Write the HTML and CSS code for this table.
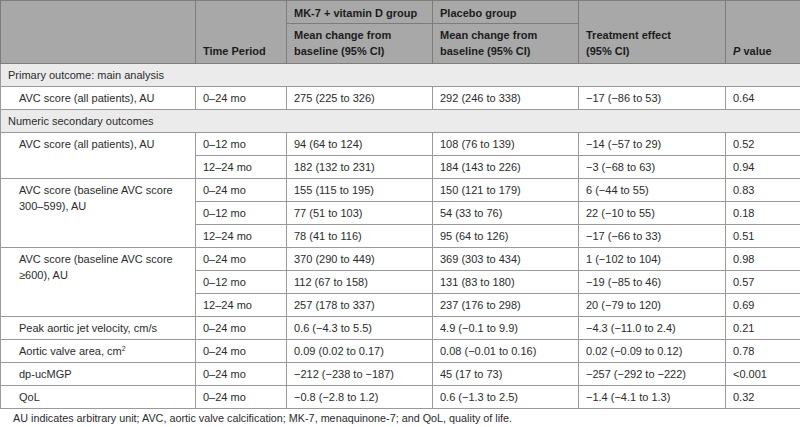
FILE: index.html
```html
<!DOCTYPE html>
<html>
<head>
<meta charset="utf-8">
<link rel="stylesheet" href="styles.css">
</head>
<body>
<table class="results">
  <colgroup>
    <col class="c-outcome">
    <col class="c-time">
    <col class="c-group">
    <col class="c-group">
    <col class="c-effect">
    <col class="c-p">
  </colgroup>
  <thead>
    <tr class="head-top">
      <th rowspan="2"></th>
      <th rowspan="2" class="bottom">Time Period</th>
      <th class="top">MK-7 + vitamin D group</th>
      <th class="top">Placebo group</th>
      <th rowspan="2" class="bottom">Treatment effect<br>(95% CI)</th>
      <th rowspan="2" class="bottom"><i>P</i> value</th>
    </tr>
    <tr class="head-sub">
      <th>Mean change from<br>baseline (95% CI)</th>
      <th>Mean change from<br>baseline (95% CI)</th>
    </tr>
  </thead>
  <tbody>
    <tr class="section"><td colspan="6">Primary outcome: main analysis</td></tr>
    <tr>
      <td class="label">AVC score (all patients), AU</td>
      <td>0–24 mo</td><td>275 (225 to 326)</td><td>292 (246 to 338)</td><td>−17 (−86 to 53)</td><td>0.64</td>
    </tr>
    <tr class="section"><td colspan="6">Numeric secondary outcomes</td></tr>
    <tr>
      <td class="label" rowspan="2">AVC score (all patients), AU</td>
      <td>0–12 mo</td><td>94 (64 to 124)</td><td>108 (76 to 139)</td><td>−14 (−57 to 29)</td><td>0.52</td>
    </tr>
    <tr>
      <td>12–24 mo</td><td>182 (132 to 231)</td><td>184 (143 to 226)</td><td>−3 (−68 to 63)</td><td>0.94</td>
    </tr>
    <tr>
      <td class="label" rowspan="3">AVC score (baseline AVC score<br>300–599), AU</td>
      <td>0–24 mo</td><td>155 (115 to 195)</td><td>150 (121 to 179)</td><td>6 (−44 to 55)</td><td>0.83</td>
    </tr>
    <tr>
      <td>0–12 mo</td><td>77 (51 to 103)</td><td>54 (33 to 76)</td><td>22 (−10 to 55)</td><td>0.18</td>
    </tr>
    <tr>
      <td>12–24 mo</td><td>78 (41 to 116)</td><td>95 (64 to 126)</td><td>−17 (−66 to 33)</td><td>0.51</td>
    </tr>
    <tr>
      <td class="label" rowspan="3">AVC score (baseline AVC score<br>≥600), AU</td>
      <td>0–24 mo</td><td>370 (290 to 449)</td><td>369 (303 to 434)</td><td>1 (−102 to 104)</td><td>0.98</td>
    </tr>
    <tr>
      <td>0–12 mo</td><td>112 (67 to 158)</td><td>131 (83 to 180)</td><td>−19 (−85 to 46)</td><td>0.57</td>
    </tr>
    <tr>
      <td>12–24 mo</td><td>257 (178 to 337)</td><td>237 (176 to 298)</td><td>20 (−79 to 120)</td><td>0.69</td>
    </tr>
    <tr>
      <td class="label">Peak aortic jet velocity, cm/s</td>
      <td>0–24 mo</td><td>0.6 (−4.3 to 5.5)</td><td>4.9 (−0.1 to 9.9)</td><td>−4.3 (−11.0 to 2.4)</td><td>0.21</td>
    </tr>
    <tr>
      <td class="label">Aortic valve area, cm<sup>2</sup></td>
      <td>0–24 mo</td><td>0.09 (0.02 to 0.17)</td><td>0.08 (−0.01 to 0.16)</td><td>0.02 (−0.09 to 0.12)</td><td>0.78</td>
    </tr>
    <tr>
      <td class="label">dp-ucMGP</td>
      <td>0–24 mo</td><td>−212 (−238 to −187)</td><td>45 (17 to 73)</td><td>−257 (−292 to −222)</td><td>&lt;0.001</td>
    </tr>
    <tr>
      <td class="label">QoL</td>
      <td>0–24 mo</td><td>−0.8 (−2.8 to 1.2)</td><td>0.6 (−1.3 to 2.5)</td><td>−1.4 (−4.1 to 1.3)</td><td>0.32</td>
    </tr>
  </tbody>
</table>
<p class="footnote">AU indicates arbitrary unit; AVC, aortic valve calcification; MK-7, menaquinone-7; and QoL, quality of life.</p>
</body>
</html>
```

FILE: styles.css
```css
html, body {
  margin: 0;
  padding: 0;
  background: #ffffff;
}

body {
  font-family: "Liberation Sans", Arial, sans-serif;
  font-size: 11px;
  color: #2b2b2b;
  width: 800px;
}

.results {
  width: 800px;
  border-collapse: collapse;
  table-layout: fixed;
  border: 1px solid #8a8a8a;
}

.c-outcome { width: 195px; }
.c-time { width: 91px; }
.c-group { width: 146px; }
.c-effect { width: 147px; }
.c-p { width: 75px; }

.results th,
.results td {
  border: 1px solid #9a9a9a;
  padding: 3px 7px 3px 7px;
  line-height: 16px;
  height: 16px;
  text-align: left;
  vertical-align: top;
  white-space: nowrap;
}

.results thead th {
  background: #a8a8a8;
  color: #1c1c1c;
  font-weight: bold;
  border-color: #7c7c7c;
}

.results thead th.bottom {
  vertical-align: bottom;
  padding-bottom: 4px;
}

.results thead th.top {
  padding-top: 4px;
  padding-bottom: 2px;
}

.head-sub th {
  padding-top: 3px;
  padding-bottom: 4px;
}

.section td {
  background: #ebebeb;
  padding-left: 7px;
}

.results td.label {
  padding-left: 18px;
}

sup {
  font-size: 7px;
  line-height: 0;
  vertical-align: 4px;
}

.footnote {
  margin: 2px 0 0 13px;
  font-size: 10.8px;
  line-height: 14px;
  color: #2b2b2b;
}
```
